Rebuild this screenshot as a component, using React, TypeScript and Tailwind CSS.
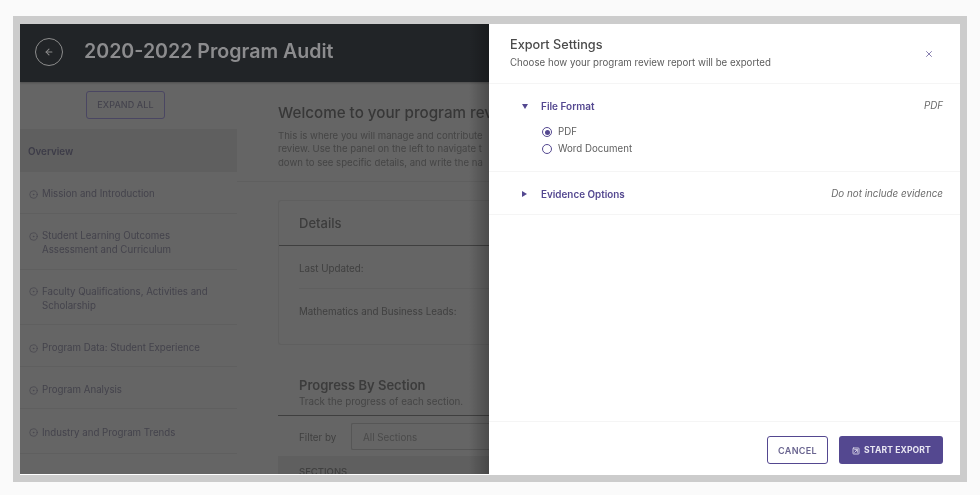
import { ArrowLeft, CircleDot, SquareArrowUpRight, X } from "lucide-react";

const sections = [
  { label: ["Mission and Introduction"], h: "h-[42px] pt-[3px]" },
  { label: ["Student Learning Outcomes", "Assessment and Curriculum"], h: "h-[56px] pt-[3px]" },
  { label: ["Faculty Qualifications, Activities and", "Scholarship"], h: "h-[55px] pt-[3px]" },
  { label: ["Program Data: Student Experience"], h: "h-[42px] pt-[5px]" },
  { label: ["Program Analysis"], h: "h-[42px] pt-[5px]" },
  { label: ["Industry and Program Trends"], h: "h-[45px] pt-[3px]" },
];

const Sidebar = () => (
  <div className="flex h-full w-[217px] shrink-0 flex-col">
    <div className="flex h-[47px] shrink-0 items-start justify-center pr-[6px] pt-[9px]">
      <div className="flex h-[28px] w-[79px] items-center justify-center rounded-[3px] border border-[#4a4662] text-[9px] font-medium tracking-[0.1px] text-[#45444e]">
        EXPAND ALL
      </div>
    </div>
    <div className="flex h-[43px] shrink-0 items-center bg-[#5f5f5f] pl-[8px] pt-[4px] text-[9.8px] font-semibold text-[#3d3c48]">
      Overview
    </div>
    {sections.map((s) => (
      <div
        key={s.label[0]}
        className={`flex shrink-0 items-center border-b border-[#5f5f5f] pl-[9px] text-[9.7px] leading-[14px] text-[#44434c] ${s.h}`}
      >
        <div className="flex flex-col">
          {s.label.map((line, i) => (
            <div key={line} className="flex items-center gap-[4px]">
              {i === 0 ? (
                <CircleDot className="h-[9px] w-[9px] shrink-0" strokeWidth={1.75} />
              ) : (
                <span className="w-[9px] shrink-0" />
              )}
              <span className="whitespace-nowrap">{line}</span>
            </div>
          ))}
        </div>
      </div>
    ))}
  </div>
);

const Main = () => (
  <div className="flex h-full w-[252px] shrink-0 flex-col overflow-hidden">
    <div className="h-[100px] shrink-0 border-b border-[#5f5f5f] pl-[41px] pt-[20px]">
      <div className="whitespace-nowrap text-[15.2px] font-medium leading-[22px] text-[#373737]">
        Welcome to your program rev
      </div>
      <div className="mt-[5px] whitespace-nowrap text-[9.6px] leading-[13.4px] text-[#454545]">
        <div>This is where you will manage and contribute</div>
        <div>review. Use the panel on the left to navigate t</div>
        <div>down to see specific details, and write the na</div>
      </div>
    </div>
    <div className="ml-[41px] mt-[18px] h-[145px] w-[211px] shrink-0 rounded-l-[3px] border-y border-l border-[#5f5f5f]">
      <div className="flex h-[45px] items-center border-b border-[#3f3f3f] pl-[20px] pt-[1px] text-[13px] font-medium text-[#3c3c3c]">
        Details
      </div>
      <div className="ml-[20px] flex h-[43px] items-center border-b border-[#5f5f5f] pt-[5px] text-[9.8px] text-[#404040]">
        Last Updated:
      </div>
      <div className="flex h-[43px] items-center pl-[20px] pt-[3px] text-[9.8px] text-[#404040]">
        Mathematics and Business Leads:
      </div>
    </div>
    <div className="ml-[41px] mt-[22px] w-[211px] shrink-0">
      <div className="h-[49px] border-b border-[#3f3f3f] pl-[21px] pt-[10px]">
        <div className="text-[13px] font-semibold leading-[16px] text-[#3c3c3c]">Progress By Section</div>
        <div className="mt-[2px] text-[9.8px] leading-[13px] text-[#454545]">Track the progress of each section.</div>
      </div>
      <div className="flex h-[40px] items-center pl-[21px]">
        <span className="w-[52px] pt-[5px] text-[9.8px] text-[#404040]">Filter by</span>
        <div className="flex h-[27px] flex-1 items-center rounded-l-[2px] border-y border-l border-[#565656] pl-[11px] pt-[5px] text-[9.8px] text-[#4a4a4a]">
          All Sections
        </div>
      </div>
      <div className="h-[18px] bg-[#5f5f5f] pl-[21px] pt-[9px] text-[9.5px] font-medium leading-[13px] text-[#404040]">SECTIONS</div>
    </div>
  </div>
);

const ExportPanel = () => (
  <div className="absolute inset-y-0 right-0 flex w-[471px] flex-col bg-white">
    <div className="flex h-[60px] shrink-0 items-center justify-between border-b border-[#f5f5f5] pl-[21px] pr-[26px]">
      <div className="-mt-[2px]">
        <div className="text-[12.7px] font-medium leading-[17px] text-[#4a4a4a]">Export Settings</div>
        <div className="mt-[3px] text-[9.7px] leading-[14px] text-[#5c5c5c]">
          Choose how your program review report will be exported
        </div>
      </div>
      <X className="h-[10px] w-[10px] text-[#5a4e92]" strokeWidth={1.75} />
    </div>
    <div className="h-[88px] shrink-0 border-b border-[#f5f5f5] pl-[33px] pr-[17px] pt-[15px]">
      <div className="flex h-[14px] items-center justify-between">
        <div className="flex items-center">
          <span className="h-0 w-0 border-x-[3px] border-t-[5px] border-x-transparent border-t-[#544890]" />
          <span className="ml-[13px] text-[10px] font-semibold leading-[14px] text-[#544890]">File Format</span>
        </div>
        <span className="text-[9.8px] italic leading-[14px] text-[#6b6b6b]">PDF</span>
      </div>
      <div className="ml-[20px] mt-[11px] flex flex-col">
        <div className="flex h-[16px] items-center gap-[6px] text-[9.7px] leading-[14px] text-[#606060]">
          <span className="flex h-[10px] w-[10px] items-center justify-center rounded-full border border-[#544890]">
            <span className="h-[5px] w-[5px] rounded-full bg-[#544890]" />
          </span>
          PDF
        </div>
        <div className="flex h-[16px] items-center gap-[6px] pt-[1px] text-[9.7px] leading-[14px] text-[#606060]">
          <span className="h-[10px] w-[10px] rounded-full border border-[#544890]" />
          Word Document
        </div>
      </div>
    </div>
    <div className="flex h-[43px] shrink-0 items-center justify-between border-b border-[#f5f5f5] pl-[33px] pr-[17px] pt-[1px]">
      <div className="flex items-center">
        <span className="h-0 w-0 border-y-[3px] border-l-[5px] border-y-transparent border-l-[#544890]" />
        <span className="ml-[14px] text-[9.9px] font-semibold leading-[14px] text-[#544890]">Evidence Options</span>
      </div>
      <span className="text-[9.8px] italic leading-[14px] text-[#6b6b6b]">Do not include evidence</span>
    </div>
    <div className="flex-1" />
    <div className="flex h-[53px] shrink-0 items-start justify-end gap-[11px] border-t border-[#f5f5f5] pr-[17px] pt-[14px]">
      <div className="flex h-[28px] w-[61px] items-center justify-center rounded-[3px] border border-[#544890] pt-[1px] text-[9px] font-semibold tracking-[0.3px] text-[#6a6590]">
        CANCEL
      </div>
      <div className="flex h-[28px] w-[104px] items-center justify-center gap-[4px] rounded-[3px] bg-[#544890] pl-[1px] pt-[1px] text-[8.6px] font-bold tracking-[0.1px] text-[#e8e6f2]">
        <SquareArrowUpRight className="h-[8px] w-[8px]" strokeWidth={2.5} />
        START EXPORT
      </div>
    </div>
  </div>
);

export default function App() {
  return (
    <div className="h-[495px] w-[980px] overflow-hidden bg-[#fafafa] pl-[13px] pt-[16px] font-['Inter',sans-serif]">
      <div className="h-[466px] w-[954px] border-x-[7px] border-b-[7px] border-t-[8px] border-[#cccccc]">
        <div className="relative h-full w-full overflow-hidden border-b border-white bg-[#656565] blur-[0.35px]">
          <div className="flex h-[58px] items-center gap-[21px] bg-[#212427] pb-[2px] pl-[15px] shadow-[0_1px_2px_rgba(0,0,0,0.25)]">
            <div className="flex h-[28px] w-[28px] items-center justify-center rounded-full border border-[#8c8c8c]">
              <ArrowLeft className="h-[10px] w-[10px] text-[#8c8c8c]" strokeWidth={2.5} />
            </div>
            <div className="whitespace-nowrap text-[19.6px] font-semibold text-[#8c8c8e]">2020-2022 Program Audit</div>
          </div>
          <div className="flex h-[392px]">
            <Sidebar />
            <Main />
          </div>
          <div className="absolute inset-y-0 right-[471px] w-[20px] bg-gradient-to-r from-transparent to-black/25" />
          <ExportPanel />
        </div>
      </div>
    </div>
  );
}
